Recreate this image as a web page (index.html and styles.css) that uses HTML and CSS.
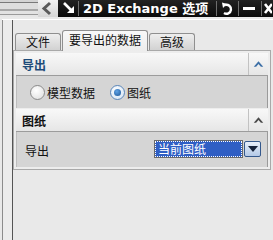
FILE: index.html
```html
<!DOCTYPE html>
<html>
<head>
<meta charset="utf-8">
<link rel="stylesheet" href="styles.css">
</head>
<body>
<div class="topbar">
  <div class="chrome"></div>
  <div class="back">
    <svg width="20" height="17" viewBox="0 0 20 17"><polyline points="12,3 6,8.5 12,14" fill="none" stroke="#5a5a5a" stroke-width="3"/></svg>
  </div>
  <div class="titlebar">
    <div class="tb-icon arrow">
      <svg width="16" height="17" viewBox="0 0 16 17"><line x1="3" y1="3" x2="10" y2="10" stroke="#fff" stroke-width="2.6"/><polygon points="6,13 13,13 13,6" fill="#fff"/></svg>
    </div>
    <div class="sep"></div>
    <div class="title">2D Exchange 选项</div>
    <div class="sep"></div>
    <div class="tb-icon undo">
      <svg width="20" height="17" viewBox="0 0 20 17"><path d="M8 5 A4.5 4.5 0 1 1 7 13" fill="none" stroke="#fff" stroke-width="2.4"/><polygon points="5,2.5 10,4 6,8" fill="#fff"/></svg>
    </div>
    <div class="sep"></div>
    <div class="tb-icon min">
      <svg width="20" height="17" viewBox="0 0 20 17"><rect x="4" y="7" width="12" height="3" fill="#fff"/></svg>
    </div>
    <div class="sep"></div>
    <div class="tb-icon close">
      <svg width="10" height="17" viewBox="0 0 10 17"><path d="M3 4 L10 13 M10 4 L3 13" stroke="#fff" stroke-width="2.6"/></svg>
    </div>
  </div>
</div>
<div class="dialog">
  <div class="rail"></div>
  <div class="main">
    <div class="tabs">
      <div class="tab">文件</div>
      <div class="tab active">要导出的数据</div>
      <div class="tab">高级</div>
    </div>
    <div class="panel">
      <div class="group">
        <div class="ghead">
          <span class="gtitle blue">导出</span>
          <span class="gtoggle">
            <svg width="20" height="10" viewBox="0 0 20 10"><polygon points="10,2 15,8 12.5,8 10,5 7.5,8 5,8" fill="#3d6fa6"/></svg>
          </span>
        </div>
        <div class="grow radios">
          <label class="radio"><span class="circle"></span>模型数据</label>
          <label class="radio"><span class="circle on"><span class="dot"></span></span>图纸</label>
        </div>
      </div>
      <div class="group">
        <div class="ghead">
          <span class="gtitle">图纸</span>
          <span class="gtoggle">
            <svg width="20" height="10" viewBox="0 0 20 10"><polygon points="10,2 15,8 12.5,8 10,5 7.5,8 5,8" fill="#4a4a4a"/></svg>
          </span>
        </div>
        <div class="grow field">
          <span class="flabel">导出</span>
          <div class="select">
            <span class="sval">当前图纸</span>
            <span class="sbtn">
              <svg width="12" height="8" viewBox="0 0 12 8"><polygon points="1,1 11,1 6,7" fill="#14213a"/></svg>
            </span>
          </div>
        </div>
      </div>
    </div>
  </div>
</div>
</body>
</html>
```
FILE: styles.css
```css
* { box-sizing: border-box; }
html, body {
  margin: 0;
  padding: 0;
}
body {
  width: 273px;
  height: 240px;
  overflow: hidden;
  background: #e9e9e9;
  font-family: "Noto Sans CJK SC", "DejaVu Sans", sans-serif;
  font-size: 12px;
  color: #111;
}
.topbar {
  display: flex;
  height: 17px;
}
.chrome {
  width: 38px;
  background: linear-gradient(to bottom, #d4d4d4 0, #d4d4d4 2px, #7a7a7a 2px, #7a7a7a 3px, #dedede 3px, #dedede 9px, #a8a8a8 9px, #a8a8a8 11px, #e2e2e2 11px, #e2e2e2 14px, #9a9a9a 14px, #9a9a9a 15px, #e6e6e6 15px);
}
.back {
  width: 20px;
  background: linear-gradient(to bottom, #f2f2f2, #d6d6d6);
  display: flex;
}
.titlebar {
  flex: 1;
  display: flex;
  align-items: stretch;
  background: linear-gradient(to bottom, #222222, #0a0a0a);
  color: #fff;
}
.tb-icon { display: flex; }
.arrow { width: 20px; padding-left: 3px; }
.sep {
  width: 1px;
  background: #6e6e6e;
  margin: 1px 0;
}
.title {
  font-family: "DejaVu Sans", "Noto Sans CJK SC", sans-serif;
  font-weight: bold;
  font-size: 13px;
  line-height: 17px;
  padding-left: 4px;
  width: 137px;
  white-space: nowrap;
  overflow: hidden;
}
.undo { width: 21px; }
.min { width: 22px; }
.close { width: 10px; }

.dialog {
  display: flex;
  margin-top: 2px;
  border-top: 1px solid #ffffff;
  height: 221px;
  margin-left: 2px;
}
.rail {
  width: 11px;
  border-left: 1px solid #8c8c8c;
  border-right: 1px solid #555;
  background: #ececec;
}
.main {
  flex: 1;
  padding-right: 2px;
}
.tabs {
  display: flex;
  align-items: flex-end;
  height: 30px;
  padding-left: 2px;
  gap: 1px;
}
.tab {
  width: 46px;
  height: 17px;
  border: 1px solid #8f8f8f;
  border-bottom: none;
  border-radius: 3px 3px 0 0;
  background: linear-gradient(to bottom, #eeeeee, #d2d2d2);
  display: flex;
  align-items: center;
  justify-content: center;
  font-size: 12px;
  line-height: 1;
}
.tab.active {
  width: 86px;
  height: 21px;
  background: linear-gradient(to bottom, #f8f8f8, #ececec);
  position: relative;
  top: 1px;
  z-index: 1;
  align-items: flex-start;
  padding-top: 3px;
}
.panel {
  border: 1px solid #a9a9a9;
  background: #ededed;
  padding: 2px;
  display: flex;
  flex-direction: column;
  gap: 1px;
  height: 120px;
}
.ghead {
  display: flex;
  height: 23px;
  border-bottom: 1px solid #9c9c9c;
  background: linear-gradient(to bottom, #f8f8f8, #e6e6e6);
  align-items: center;
}
.gtitle {
  flex: 1;
  font-weight: bold;
  font-size: 12px;
  padding-left: 6px;
  color: #111;
}
.gtitle.blue { color: #1d4a78; }
.gtoggle {
  width: 20px;
  height: 22px;
  border-left: 1px solid #c2c2c2;
  display: flex;
  align-items: center;
  justify-content: center;
}
.grow {
  background: #d5d5d5;
  border-left: 1px solid #bdbdbd;
  border-right: 1px solid #9a9a9a;
  display: flex;
  align-items: center;
}
.radios {
  height: 32px;
  padding-left: 13px;
  gap: 15px;
}
.radio {
  display: flex;
  align-items: center;
  gap: 2px;
  font-size: 12px;
}
.circle {
  width: 15px;
  height: 15px;
  border-radius: 50%;
  border: 1px solid #8a8a8a;
  background: radial-gradient(circle at 40% 35%, #ffffff, #dcdcdc);
  display: flex;
  align-items: center;
  justify-content: center;
}
.circle.on {
  border-color: #5b86b8;
  background: radial-gradient(circle at 40% 35%, #ffffff, #cfe0f2);
}
.dot {
  width: 7px;
  height: 7px;
  border-radius: 50%;
  background: radial-gradient(circle at 40% 35%, #5fa3e6, #1c5596);
}
.field {
  height: 35px;
  padding-left: 8px;
  justify-content: space-between;
  padding-right: 6px;
}
.flabel { font-size: 12px; padding-top: 1px; }
.select {
  display: flex;
  width: 106px;
  height: 16px;
  margin-top: -2px;
}
.sval {
  flex: 1;
  background: #2f5ec4;
  color: #fff;
  border: 1px dotted #ffffff;
  outline: 1px solid #6a6a6a;
  font-size: 12px;
  line-height: 13px;
  padding-left: 2px;
  margin-right: 2px;
}
.sbtn {
  width: 17px;
  border: 1px solid #34588c;
  border-radius: 2px;
  background: linear-gradient(to bottom, #e6eefa, #b4c9e6);
  display: flex;
  align-items: center;
  justify-content: center;
}
```
